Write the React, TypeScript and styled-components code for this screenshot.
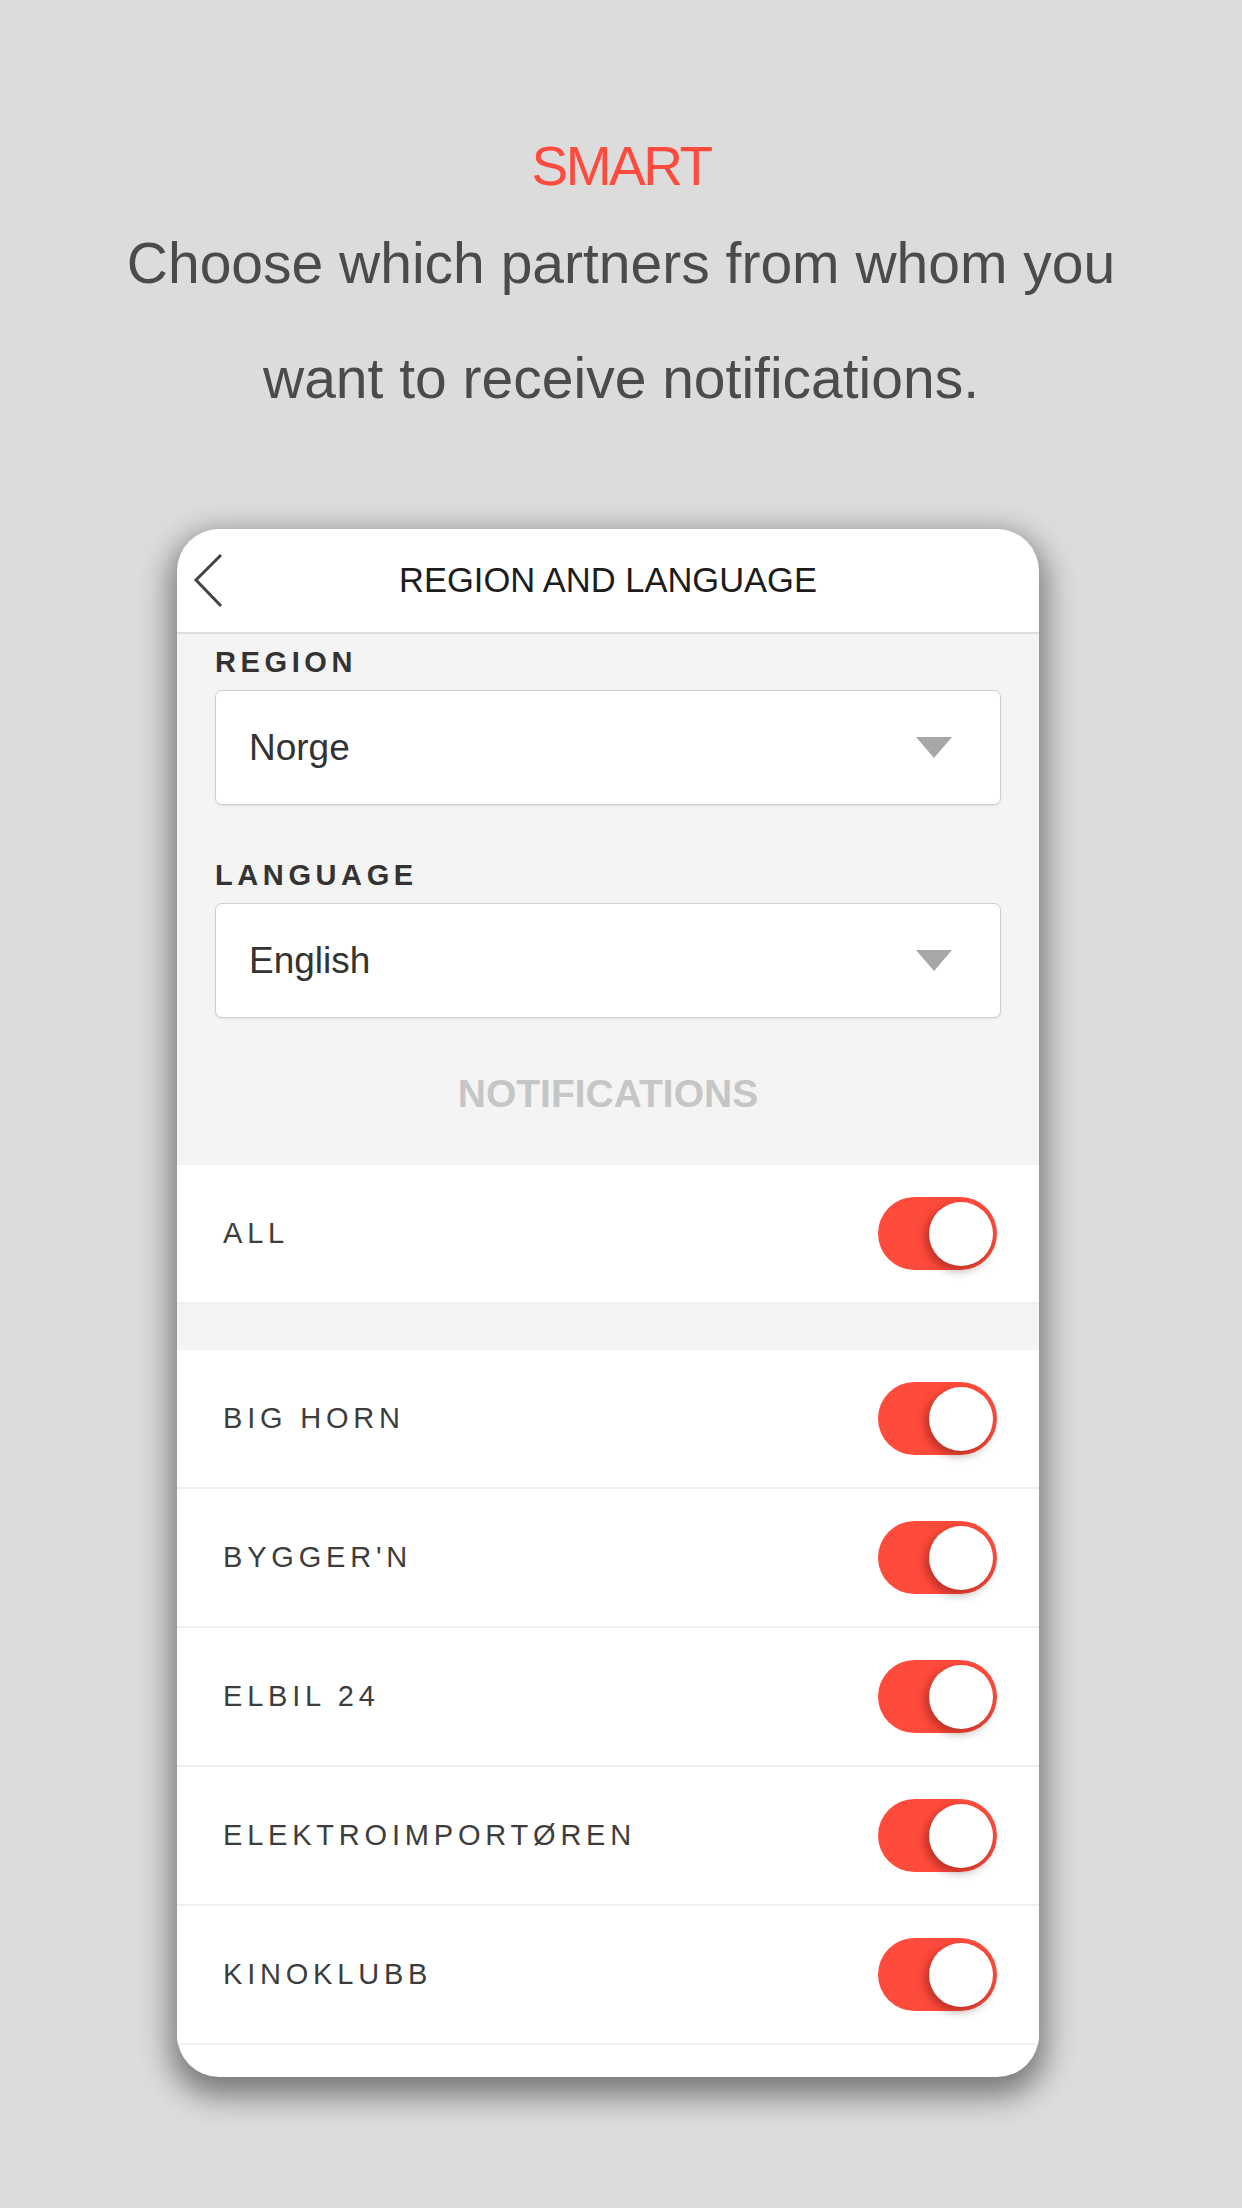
import * as React from 'react';
import styled, { createGlobalStyle } from 'styled-components';

const GlobalStyle = createGlobalStyle`
  html, body {
    margin: 0;
    padding: 0;
    background: #dcdcdc;
  }
  body {
    width: 1242px;
    min-height: 2208px;
    font-family: "Liberation Sans", Arial, sans-serif;
  }
`;

const Page = styled.div`
  width: 1242px;
  height: 2208px;
  padding-top: 136px;
  box-sizing: border-box;
  background: #dcdcdc;
`;

const Intro = styled.div`
  text-align: center;
  .kicker {
    font-size: 55px;
    line-height: 60px;
    letter-spacing: -2.5px;
    color: #ff4b3e;
    margin-bottom: 10px;
  }
  .lead {
    font-size: 57px;
    line-height: 115px;
    color: #4b4b4b;
  }
`;

const Phone = styled.div`
  width: 862px;
  height: 1548px;
  margin: 93px 0 0 177px;
  border-radius: 42px;
  background: #fff;
  overflow: hidden;
  box-shadow: 0 12px 30px 7px rgba(0, 0, 0, 0.45);
`;

const Header = styled.div`
  display: grid;
  grid-template-columns: 1fr auto 1fr;
  align-items: center;
  height: 103px;
  border-bottom: 2px solid #dedede;
  .back {
    padding-left: 16px;
    display: flex;
  }
  .title {
    font-size: 34.5px;
    color: #1c1c1c;
  }
`;

const Settings = styled.div`
  background: #f4f4f4;
  padding: 11px 38px 49px;
`;

const FieldLabel = styled.div<{ $gap?: number }>`
  margin-top: ${(p) => p.$gap ?? 0}px;
  font-size: 29px;
  line-height: 34px;
  font-weight: bold;
  letter-spacing: 4.6px;
  color: #333;
`;

const Select = styled.div`
  margin-top: 11px;
  height: 115px;
  box-sizing: border-box;
  display: flex;
  align-items: center;
  justify-content: space-between;
  padding: 0 48px 0 33px;
  background: #fff;
  border: 1.5px solid #cfcfcf;
  border-radius: 7px;
  box-shadow: 0 1px 2px rgba(0, 0, 0, 0.08);
  font-size: 37px;
  color: #333;
`;

const Caret = styled.span`
  width: 0;
  height: 0;
  border-left: 18px solid transparent;
  border-right: 18px solid transparent;
  border-top: 21px solid #a7a7a7;
`;

const SectionTitle = styled.div`
  margin-top: 54px;
  text-align: center;
  font-size: 39px;
  line-height: 44px;
  font-weight: bold;
  color: #c6c6c6;
`;

const Row = styled.div`
  height: 137px;
  display: flex;
  align-items: center;
  justify-content: space-between;
  padding: 0 42px 0 46px;
  background: #fff;
  border-bottom: 2px solid #efefef;
`;

const RowLabel = styled.span`
  font-size: 29px;
  letter-spacing: 4.8px;
  color: #3d3d3d;
`;

const Band = styled.div`
  height: 46px;
  background: #f4f4f4;
`;

const Tail = styled.div`
  height: 32px;
`;

const Toggle = styled.div<{ $on: boolean }>`
  width: 119px;
  height: 73px;
  box-sizing: border-box;
  padding: 4px;
  border-radius: 37px;
  display: flex;
  align-items: center;
  justify-content: ${(p) => (p.$on ? 'flex-end' : 'flex-start')};
  background: ${(p) => (p.$on ? '#ff4b3c' : '#e5e5e5')};
  .knob {
    width: 64px;
    height: 64px;
    border-radius: 50%;
    background: #fff;
    box-shadow: -5px 3px 9px rgba(120, 20, 10, 0.35), 0 7px 10px rgba(0, 0, 0, 0.12);
  }
`;

const partners = ['BIG HORN', "BYGGER'N", 'ELBIL 24', 'ELEKTROIMPORTØREN', 'KINOKLUBB'];

const Back = () => (
  <svg width="32" height="56" viewBox="0 0 32 56">
    <polyline points="28,2 3,27 28,53" fill="none" stroke="#444" strokeWidth="3" />
  </svg>
);

export default function App() {
  const [on, setOn] = React.useState<Record<string, boolean>>({});
  const flip = (k: string) => setOn((s) => ({ ...s, [k]: s[k] === false }));
  const isOn = (k: string) => on[k] !== false;

  return (
    <Page>
      <GlobalStyle />
      <Intro>
        <div className="kicker">SMART</div>
        <div className="lead">Choose which partners from whom you</div>
        <div className="lead">want to receive notifications.</div>
      </Intro>
      <Phone>
        <Header>
          <div className="back">
            <Back />
          </div>
          <div className="title">REGION AND LANGUAGE</div>
          <div />
        </Header>
        <Settings>
          <FieldLabel>REGION</FieldLabel>
          <Select>
            <span>Norge</span>
            <Caret />
          </Select>
          <FieldLabel $gap={53}>LANGUAGE</FieldLabel>
          <Select>
            <span>English</span>
            <Caret />
          </Select>
          <SectionTitle>NOTIFICATIONS</SectionTitle>
        </Settings>
        <Row>
          <RowLabel>ALL</RowLabel>
          <Toggle $on={isOn('ALL')} onClick={() => flip('ALL')}>
            <div className="knob" />
          </Toggle>
        </Row>
        <Band />
        {partners.map((p) => (
          <Row key={p}>
            <RowLabel>{p}</RowLabel>
            <Toggle $on={isOn(p)} onClick={() => flip(p)}>
              <div className="knob" />
            </Toggle>
          </Row>
        ))}
        <Tail />
      </Phone>
    </Page>
  );
}
